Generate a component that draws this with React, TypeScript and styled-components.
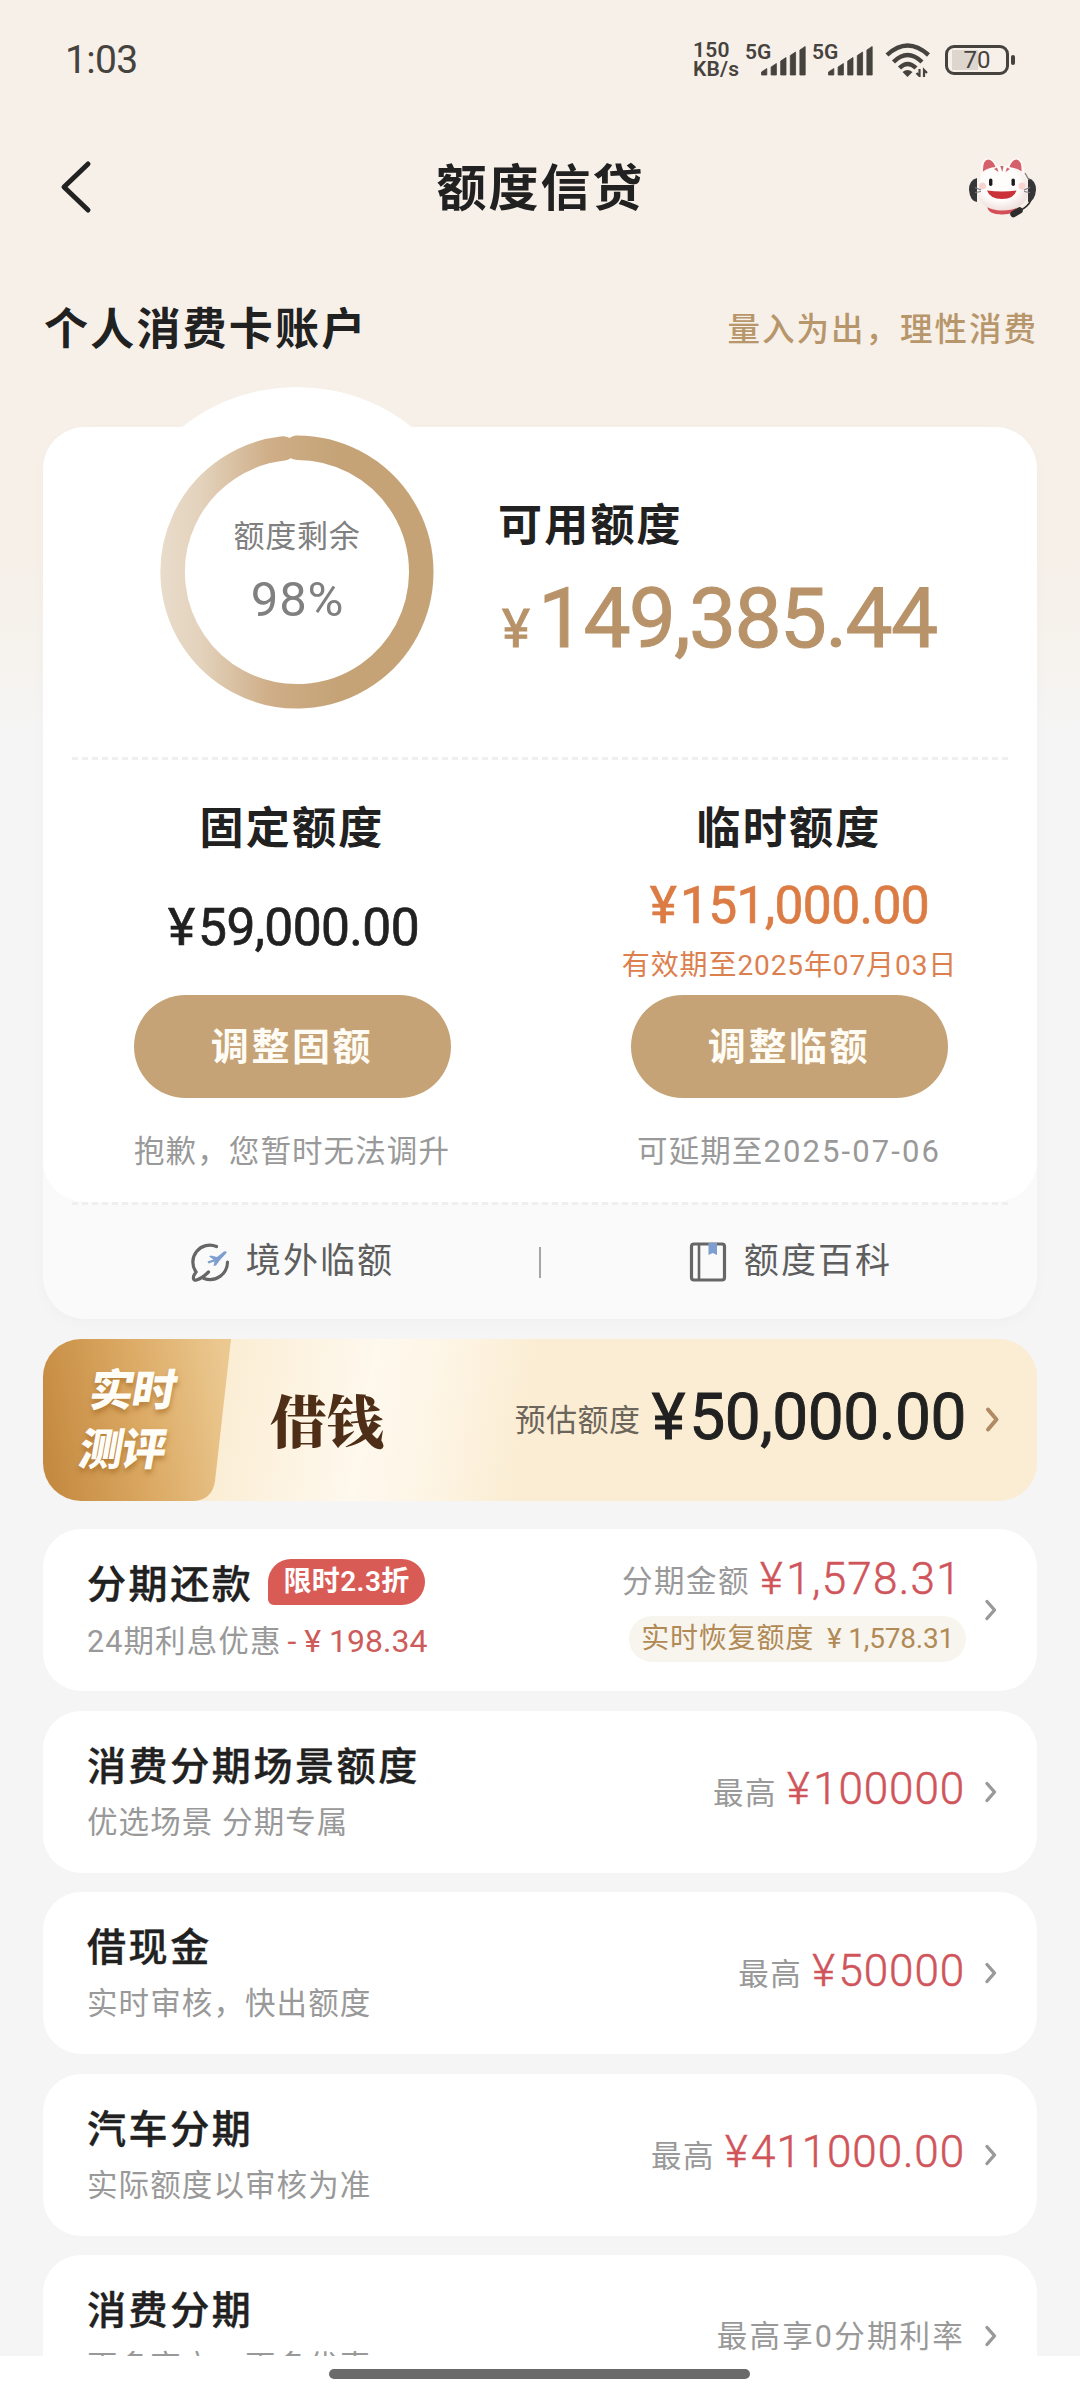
import React from "react";
import styled, { createGlobalStyle } from "styled-components";

const Global = createGlobalStyle`
  *, *::before, *::after { box-sizing: border-box; }
  body { margin: 0; background: #f5f5f5; }
`;

const Page = styled.main`
  display: flex;
  flex-direction: column;
  width: 1080px;
  height: 2400px;
  overflow: hidden;
  color: #212121;
  font-family: Roboto, "Noto Sans CJK SC", sans-serif;
  background: linear-gradient(180deg, #f6f0e9 0, #f6f0e9 560px, #f6f2ed 650px, #f5f5f5 730px);
`;

const Scroller = styled.div`
  flex: none;
  height: 2356px;
  overflow: hidden;
`;

/* ---------- status bar ---------- */

const StatusBar = styled.header`
  display: flex;
  align-items: center;
  justify-content: space-between;
  height: 118px;
  padding: 2px 71px 0 65px;
  color: #46423e;
`;

const Clock = styled.span`
  font-size: 39px;
  line-height: 40px;
  letter-spacing: -0.7px;
`;

const StatusIcons = styled.div`
  display: flex;
  align-items: center;
`;

const NetSpeed = styled.div`
  display: flex;
  flex-direction: column;
  width: 52px;
  font-size: 21px;
  font-weight: 600;
  line-height: 19px;
  letter-spacing: 0.2px;
`;

const Signal = styled.div`
  display: flex;
  width: 67px;
  height: 34px;
`;

const Net = styled.span`
  width: 16px;
  font-size: 21px;
  font-weight: 600;
  line-height: 18px;
`;

const Bars = styled.svg`
  flex: none;
  width: 45px;
  height: 30px;
  margin-top: 3px;
`;

const Wifi = styled.svg`
  width: 46px;
  height: 34px;
  margin-left: 6px;
`;

const Battery = styled.div`
  position: relative;
  display: flex;
  align-items: center;
  justify-content: center;
  width: 64px;
  height: 30px;
  margin-left: 14px;
  border: 3.5px solid #46423e;
  border-radius: 9px;
  background: linear-gradient(#dcd6cf, #dcd6cf) 4px center / 26px 20px no-repeat;
  font-size: 24px;
  line-height: 24px;

  &::after {
    content: "";
    position: absolute;
    right: -9px;
    width: 4px;
    height: 10px;
    border-radius: 2px;
    background: #46423e;
  }
`;

/* ---------- title bar ---------- */

const TitleBar = styled.nav`
  display: grid;
  grid-template-columns: 90px 1fr 90px;
  align-items: center;
  height: 138px;
  padding: 0 40px 0 58px;
`;

const Back = styled.svg`
  width: 36px;
  height: 56px;
`;

const Title = styled.h1`
  margin: 3px 0 0 -17px;
  font-size: 50px;
  font-weight: 600;
  line-height: 70px;
  letter-spacing: 2px;
  text-align: center;
`;

const Mascot = styled.svg`
  justify-self: end;
  width: 76px;
  height: 66px;
`;

/* ---------- account ---------- */

const AccountRow = styled.div`
  display: flex;
  align-items: center;
  justify-content: space-between;
  height: 146px;
  margin-bottom: 25px;
  padding: 2px 43px 0 44px;
`;

const Heading = styled.h2`
  margin: 0;
  font-size: 44px;
  font-weight: 600;
  line-height: 60px;
  letter-spacing: 2.2px;
`;

const Motto = styled.span`
  font-size: 32.5px;
  font-weight: 500;
  line-height: 40px;
  letter-spacing: 2px;
  margin-right: -1px;
  color: #b8966b;
`;

const Stack = styled.div`
  display: flex;
  flex-direction: column;
  padding: 0 43px;
`;

const Account = styled.section`
  position: relative;
  border-radius: 42px;
  background: #fafafa;
  box-shadow: 0 4px 14px rgba(0, 0, 0, 0.025);

  &::before {
    content: "";
    position: absolute;
    top: -40px;
    left: 69px;
    width: 370px;
    height: 370px;
    border-radius: 50%;
    background: #fff;
  }
`;

const AccountBody = styled.div`
  position: relative;
  height: 775px;
  border-radius: 42px;
  background: #fff;
`;

const Available = styled.div`
  display: flex;
  height: 330px;
  padding: 8px 0 0 117px;
`;

const Ring = styled.div`
  display: grid;
  width: 274px;
  height: 274px;
  > * { grid-area: 1 / 1; }
`;

const RingLabel = styled.div`
  display: flex;
  flex-direction: column;
  align-items: center;
  padding-top: 81px;
  color: #808080;
`;

const RingName = styled.span`
  font-size: 31px;
  line-height: 42px;
  letter-spacing: 0.8px;
`;

const RingValue = styled.span`
  margin: 17px 0 0 1px;
  font-size: 49px;
  line-height: 50px;
  letter-spacing: 0.8px;
`;

const AvailableText = styled.div`
  display: flex;
  flex-direction: column;
  padding: 61px 0 0 64px;
`;

const AvailableAmount = styled.div`
  margin: 13px 0 0 4px;
  font-size: 84px;
  line-height: 100px;
  letter-spacing: -1.8px;
  color: #b8936a;
  -webkit-text-stroke: 1px #b8936a;
  white-space: nowrap;
`;

const Currency = styled.small`
  margin-right: 10px;
  font-size: 53px;
`;

const Dashes = styled.div`
  height: 3px;
  margin: 0 29px;
  background: repeating-linear-gradient(90deg, #efefef 0 6px, transparent 6px 10px);
`;

const Columns = styled.div`
  display: grid;
  grid-template-columns: 1fr 1fr;
`;

const Column = styled.div`
  display: flex;
  flex-direction: column;
  align-items: center;
  padding: 39px 0 0 1px;
`;

const Figures = styled.div<{ $two?: boolean }>`
  display: flex;
  flex-direction: column;
  align-items: center;
  justify-content: center;
  height: 136px;
  padding: ${(p) => (p.$two ? "18px 0 0 1px" : "2px 0 0 3px")};
`;

const Sum = styled.span<{ $tone?: string }>`
  font-size: 51.5px;
  line-height: 60px;
  letter-spacing: -0.6px;
  color: ${(p) => p.$tone ?? "#212121"};
  -webkit-text-stroke: 0.7px ${(p) => p.$tone ?? "#212121"};

  &::first-letter { letter-spacing: 3px; }
`;

const Validity = styled.span`
  font-size: 28px;
  line-height: 60px;
  letter-spacing: 0.9px;
  color: #dc8050;
`;

const Button = styled.button`
  width: 317px;
  height: 103px;
  padding: 0;
  border: 0;
  border-radius: 52px;
  background: #c5a377;
  color: #fffcf5;
  font: 700 38px/105px Roboto, "Noto Sans CJK SC", sans-serif;
  letter-spacing: 2.6px;
`;

const Hint = styled.span`
  margin-top: 34px;
  font-size: 30.5px;
  line-height: 40px;
  letter-spacing: 1.1px;
  color: #999;
`;

const HintDate = styled.span`
  font-size: 31px;
  letter-spacing: 2.1px;
`;

const Links = styled.div`
  display: flex;
  align-items: center;
  height: 114px;
`;

const LinkItem = styled.a`
  display: flex;
  flex: 1;
  align-items: center;
  justify-content: center;
  gap: 16px;
  padding-left: 2px;
  font-size: 35px;
  line-height: 50px;
  letter-spacing: 2.1px;
  color: #5e5e5e;
`;

const LinkIcon = styled.svg`
  width: 40px;
  height: 42px;
`;

const Rule = styled.i`
  width: 2px;
  height: 31px;
  background: #a5a5a5;
`;

/* ---------- loan banner ---------- */

const Banner = styled.section`
  display: flex;
  align-items: center;
  height: 162px;
  margin-top: 20px;
  border-radius: 38px;
  overflow: hidden;
  background:
    linear-gradient(100deg, rgba(254, 247, 234, 0) 180px, #fef8ed 330px, rgba(254, 247, 234, 0.85) 390px, rgba(251, 237, 211, 0) 490px),
    #fbedd3;
`;

const Flag = styled.div`
  display: grid;
  width: 190px;
  height: 162px;
  > * { grid-area: 1 / 1; }
`;

const FlagText = styled.div`
  display: flex;
  flex-direction: column;
  padding: 23px 0 0 42px;
  font-size: 44px;
  font-weight: 900;
  line-height: 59px;
  letter-spacing: -1.5px;
  color: #fffdf8;
  text-shadow: 1px 4px 5px rgba(150, 90, 20, 0.5);
  transform: skewX(-10deg);
`;

const Borrow = styled.strong`
  margin: -5px 0 0 37px;
  font: 900 57px/70px "Noto Serif CJK SC", "Noto Sans CJK SC", serif;
  color: #4e2e17;
`;

const BannerRight = styled.div`
  display: flex;
  align-items: center;
  margin-left: auto;
  padding-right: 37px;
`;

const Estimate = styled.span`
  margin: 2px 11px 0 0;
  font-size: 31px;
  line-height: 50px;
  letter-spacing: 0.5px;
  color: #6c655b;
`;

const EstimateSum = styled.span`
  margin: -4px 18px 0 0;
  font-size: 64px;
  line-height: 80px;
  letter-spacing: -0.5px;
  -webkit-text-stroke: 0.9px #212121;

  &::first-letter { letter-spacing: 4px; }
`;

const Chevron = styled.svg`
  flex: none;
  width: 16px;
  height: 28px;
`;

/* ---------- product list ---------- */

const List = styled.div`
  display: flex;
  flex-direction: column;
  gap: 19.6px;
  margin-top: 28px;
`;

const Row = styled.article`
  display: flex;
  flex: none;
  align-items: center;
  justify-content: space-between;
  height: 162px;
  padding: 0 38px 0 44px;
  border-radius: 38px;
  background: #fff;
`;

const Left = styled.div`
  display: flex;
  flex-direction: column;
  gap: 6px;
  padding-top: 6px;
`;

const NameLine = styled.div`
  display: flex;
  align-items: center;
  gap: 15px;
  height: 50px;
`;

const Name = styled.h3`
  margin: 0;
  font-size: 39px;
  font-weight: 500;
  line-height: 50px;
  letter-spacing: 2.6px;
  -webkit-text-stroke: 0.4px #212121;
`;

const Badge = styled.span`
  height: 46px;
  margin-top: -6px;
  padding: 0 15px 0 15px;
  border-radius: 24px 24px 24px 6px;
  background: #d95b56;
  color: #fff;
  font-size: 28px;
  font-weight: 600;
  line-height: 46px;
  letter-spacing: 0.4px;
`;

const Desc = styled.div`
  font-size: 30.5px;
  line-height: 50px;
  letter-spacing: 1.1px;
  color: #999;
`;

const Saving = styled.span`
  margin-left: 6px;
  letter-spacing: 0;
  font-size: 32px;
  color: #cd5c5a;
`;

const Right = styled.div`
  display: flex;
  align-items: center;
  gap: 18px;
`;

const Values = styled.div`
  display: flex;
  flex-direction: column;
  align-items: flex-end;
  gap: 11px;
`;

const ValueLine = styled.div<{ $inset?: number }>`
  display: flex;
  align-items: center;
  margin-right: ${(p) => p.$inset ?? 0}px;
`;

const Label = styled.span<{ $drop?: number; $tracking?: number }>`
  margin-top: ${(p) => p.$drop ?? 0}px;
  font-size: 30.5px;
  line-height: 46px;
  letter-spacing: ${(p) => p.$tracking ?? 1.5}px;
  color: #999;
`;

const Price = styled.span<{ $wide?: boolean }>`
  margin: -5px 0 0 10px;
  font-size: 44px;
  font-weight: 300;
  line-height: 50px;
  letter-spacing: ${(p) => (p.$wide ? 1.3 : 0.9)}px;
  color: #d0555b;
  -webkit-text-stroke: 0.5px #d0555b;

  &::first-letter { letter-spacing: 3.5px; }
`;

const Pill = styled.span`
  height: 46px;
  margin-right: -1px;
  padding: 0 12px;
  border-radius: 23px;
  background: #f8f5ef;
  color: #b18a55;
  font-size: 28px;
  line-height: 46px;
  letter-spacing: 0.8px;
`;

const PillSum = styled.span`
  margin-left: 13px;
  letter-spacing: -0.2px;
`;

/* ---------- bottom ---------- */

const HomeArea = styled.footer`
  display: flex;
  flex: 1;
  justify-content: center;
  padding: 13px 1px 0 0;
  background: #fff;
`;

const HomeBar = styled.i`
  width: 421px;
  height: 10px;
  border-radius: 5px;
  background: #6a6a6a;
`;

const SignalIcon = () => (
  <Bars viewBox="0 0 45 30" fill="#46423e">
    {[22, 17, 11, 5.5, 0].map((y, i) => (
      <path key={y} d={`M${i * 9.6 + 0.5} 29V${y + 4}L${i * 9.6 + 5.8} ${y + 0.5}V29Z`} stroke="#46423e" strokeWidth=".8" strokeLinejoin="round" />
    ))}
  </Bars>
);

const Arrow = ({ color = "#999", width = 3.4, big = false }) => (
  <Chevron viewBox="0 0 16 28" fill="none" stroke={color} strokeWidth={width} strokeLinecap="round" strokeLinejoin="round">
    <path d={big ? "M4 3.500L12.500 13.500L4 23.500" : "M4 5.500L11.500 14L4 22.500"} />
  </Chevron>
);

const Cat = () => (
  <Mascot viewBox="0 0 76 66">
    <defs>
      <radialGradient id="fur" cx=".45" cy=".4" r=".62">
        <stop offset=".6" stopColor="#fffdfc" />
        <stop offset="1" stopColor="#eedfdc" />
      </radialGradient>
    </defs>
    <path d="M13 24Q5 26 5 36Q6 47 13 48Z" fill="#363537" />
    <path d="M64 24Q72 26 72 36Q71 47 64 48Z" fill="#363537" />
    <path d="M16 24Q16 3 24 4Q31 5 34 13ZM43 13Q46 4 53 4Q60 5 61 24Z" fill="#fff7f5" />
    <path d="M23 52H53Q52 60.500 38 60.500Q24 60.500 23 52Z" fill="#d34e56" />
    <path d="M38.500 11.500C53 11.500 64 22 64 36C64 50 53 56.500 38.500 56.500C24 56.500 13.500 50 13.500 36C13.500 22 24 11.500 38.500 11.500Z" fill="url(#fur)" />
    <path d="M19 17.500Q18.500 6 24.500 5.500Q29 6 31.500 13Q24 13.500 19 17.500ZM45.500 13Q48 5.500 52.500 5.500Q58 6.500 57.500 17.500Q53 14 45.500 13Z" fill="#d5606a" />
    <path d="M36.300 12H39.500L38.300 18ZM30 15L33 13.500L34.500 18ZM46 15L43 13.500L41.500 18Z" fill="#c9686d" />
    <circle cx="18.500" cy="32" r="3.500" fill="#f9d3d1" />
    <circle cx="58" cy="32" r="3.500" fill="#f9d3d1" />
    <rect x="25" y="24.500" width="3.400" height="7.500" rx="1.700" fill="#1f1a1b" />
    <rect x="47.500" y="24.500" width="3.400" height="7.500" rx="1.700" fill="#1f1a1b" />
    <path d="M23 36.500Q38 38.500 52.500 36.500Q50 45 38 45Q26 45 23 36.500Z" fill="#cb3238" />
    <path d="M11 33.500L17 36M11 38.500L17 37.500M66 33.500L60 36M66 38.500L60 37.500M61 19L65 26" stroke="#77797d" strokeWidth="1.200" fill="none" />
    <path d="M67 46Q64 53 55 57" stroke="#2e2b2c" strokeWidth="1.800" fill="none" />
    <path d="M49.500 60L55.500 56.500" stroke="#2e2b2c" strokeWidth="6.500" strokeLinecap="round" />
  </Mascot>
);

const products = [
  { name: "消费分期场景额度", desc: "优选场景 分期专属", price: "¥100000" },
  { name: "借现金", desc: "实时审核，快出额度", price: "¥50000" },
  { name: "汽车分期", desc: "实际额度以审核为准", price: "¥411000.00" },
];

export default function App() {
  return (
    <Page>
      <Global />
      <Scroller>
        <StatusBar>
          <Clock>1:03</Clock>
          <StatusIcons>
            <NetSpeed>
              <span>150</span>
              <span>KB/s</span>
            </NetSpeed>
            <Signal><Net>5G</Net><SignalIcon /></Signal>
            <Signal><Net>5G</Net><SignalIcon /></Signal>
            <Wifi viewBox="0 0 46 34" fill="none" stroke="#46423e" strokeWidth="4.400">
              <path d="M2 12Q22.500 -7 43.500 12M8.500 19Q22.500 5 37 19M14.500 25Q22.500 17 31 25" />
              <path d="M17.500 29Q22.500 25 27.500 29L22.500 34Z" fill="#46423e" stroke="none" />
              <path d="M34.500 26V33L31.500 30M39 34V27L42 30" strokeWidth="2.200" />
            </Wifi>
            <Battery>70</Battery>
          </StatusIcons>
        </StatusBar>

        <TitleBar>
          <Back viewBox="0 0 36 56" fill="none" stroke="#222" strokeWidth="5" strokeLinecap="round" strokeLinejoin="round">
            <path d="M30 5L6 28L30 51" />
          </Back>
          <Title>额度信贷</Title>
          <Cat />
        </TitleBar>

        <AccountRow>
          <Heading>个人消费卡账户</Heading>
          <Motto>量入为出，理性消费</Motto>
        </AccountRow>

        <Stack>
          <Account>
            <AccountBody>
              <Available>
                <Ring>
                  <svg width="274" height="274" viewBox="0 0 274 274" fill="none">
                    <defs>
                      <linearGradient id="gold" gradientUnits="userSpaceOnUse" x1="0" x2="274" y1="0" y2="0">
                        <stop offset="0" stopColor="#e9dccb" />
                        <stop offset=".15" stopColor="#e3d2bc" />
                        <stop offset=".4" stopColor="#cfae88" />
                        <stop offset=".65" stopColor="#c5a377" />
                      </linearGradient>
                    </defs>
                    <path
                      d="M137 12.700A124.300 124.300 0 1 1 123.500 13.430"
                      stroke="url(#gold)" strokeWidth="24.500" strokeLinecap="round"
                    />
                  </svg>
                  <RingLabel>
                    <RingName>额度剩余</RingName>
                    <RingValue>98%</RingValue>
                  </RingLabel>
                </Ring>
                <AvailableText>
                  <Heading>可用额度</Heading>
                  <AvailableAmount><Currency>¥</Currency>149,385.44</AvailableAmount>
                </AvailableText>
              </Available>
              <Dashes />
              <Columns>
                <Column>
                  <Heading>固定额度</Heading>
                  <Figures><Sum>¥59,000.00</Sum></Figures>
                  <Button>调整固额</Button>
                  <Hint>抱歉，您暂时无法调升</Hint>
                </Column>
                <Column>
                  <Heading>临时额度</Heading>
                  <Figures $two>
                    <Sum $tone="#dc7c45">¥151,000.00</Sum>
                    <Validity>有效期至2025年07月03日</Validity>
                  </Figures>
                  <Button>调整临额</Button>
                  <Hint>可延期至<HintDate>2025-07-06</HintDate></Hint>
                </Column>
              </Columns>
            </AccountBody>
            <Dashes />
            <Links>
              <LinkItem>
                <LinkIcon viewBox="0 0 40 42" fill="none" stroke="#666" strokeWidth="3.200" strokeLinecap="round">
                  <path d="M26.500 5.500A17 17 0 0 0 6 31C1.500 37 3.500 40 6.500 39Q12 37.500 18.500 31M14 37.500A17.500 17.500 0 0 0 37.500 21" />
                  <path d="M19 15.500L21 14.500L27 16L34 10.500Q37 9.500 36.500 12L30 19L26 24.500L23.500 25L24.500 20.500L18.500 22.500L17.500 20.500L23.500 18.500Z" fill="#7d9fcf" stroke="none" />
                </LinkIcon>
                境外临额
              </LinkItem>
              <Rule />
              <LinkItem>
                <LinkIcon viewBox="0 0 40 42" fill="none" stroke="#666" strokeWidth="3.200" strokeLinejoin="round">
                  <rect x="3.500" y="3" width="33" height="36" rx="2.500" />
                  <path d="M11 3V39" strokeWidth="2.600" />
                  <path d="M20.500 2H29V14L24.700 12L20.500 14Z" fill="#7d9fcf" stroke="none" />
                </LinkIcon>
                额度百科
              </LinkItem>
            </Links>
          </Account>

          <Banner>
            <Flag>
              <svg width="190" height="162" viewBox="0 0 190 162">
                <defs>
                  <linearGradient id="amber" x1="0" x2="1" y1=".55" y2=".4">
                    <stop offset="0" stopColor="#c58a41" />
                    <stop offset=".5" stopColor="#dba963" />
                    <stop offset="1" stopColor="#ebc890" />
                  </linearGradient>
                </defs>
                <path d="M0 0H188L172 142Q169 162 149 162H0Z" fill="url(#amber)" />
              </svg>
              <FlagText>
                <span>实时</span>
                <span>测评</span>
              </FlagText>
            </Flag>
            <Borrow>借钱</Borrow>
            <BannerRight>
              <Estimate>预估额度</Estimate>
              <EstimateSum>¥50,000.00</EstimateSum>
              <Arrow color="#b08a62" width={4} big />
            </BannerRight>
          </Banner>

          <List>
            <Row>
              <Left>
                <NameLine>
                  <Name>分期还款</Name>
                  <Badge>限时2.3折</Badge>
                </NameLine>
                <Desc>24期利息优惠<Saving>- ¥ 198.34</Saving></Desc>
              </Left>
              <Right>
                <Values>
                  <ValueLine $inset={3}>
                    <Label>分期金额</Label>
                    <Price $wide>¥1,578.31</Price>
                  </ValueLine>
                  <Pill>实时恢复额度<PillSum>¥ 1,578.31</PillSum></Pill>
                </Values>
                <Arrow />
              </Right>
            </Row>
            {products.map((p) => (
              <Row key={p.name}>
                <Left>
                  <Name>{p.name}</Name>
                  <Desc>{p.desc}</Desc>
                </Left>
                <Right>
                  <ValueLine>
                    <Label $drop={4}>最高</Label>
                    <Price>{p.price}</Price>
                  </ValueLine>
                  <Arrow />
                </Right>
              </Row>
            ))}
            <Row>
              <Left>
                <Name>消费分期</Name>
                <Desc>更多商户，更多优惠</Desc>
              </Left>
              <Right>
                <Label $drop={1} $tracking={2.2}>最高享0分期利率</Label>
                <Arrow />
              </Right>
            </Row>
          </List>
        </Stack>
      </Scroller>
      <HomeArea><HomeBar /></HomeArea>
    </Page>
  );
}
